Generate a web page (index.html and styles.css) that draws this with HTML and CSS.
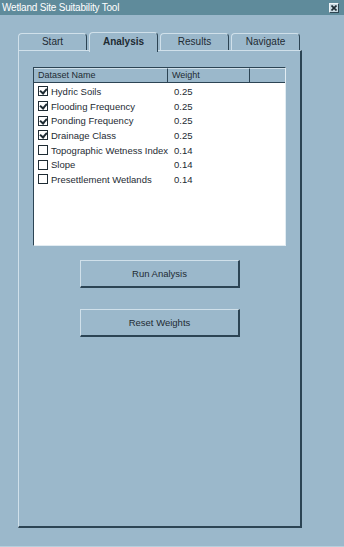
FILE: index.html
```html
<!DOCTYPE html>
<html>
<head>
  <title>Wetland Site Suitability Tool</title>
  <link rel="stylesheet" href="styles.css">
</head>
<body>
  <div class="window">
    <div class="titlebar">
      <span class="title">Wetland Site Suitability Tool</span>
      <span class="close">
        <svg width="6" height="6" viewBox="0 0 6 6"><path d="M0.5 0.5L5.5 5.5M5.5 0.5L0.5 5.5" stroke="#1c2b33" stroke-width="1.6"/></svg>
      </span>
    </div>

    <div class="content">
      <div class="tabs">
        <div class="tab">Start</div>
        <div class="tab active">Analysis</div>
        <div class="tab">Results</div>
        <div class="tab">Navigate</div>
      </div>

      <div class="panel">
        <div class="listbox">
          <div class="list-head">
            <div class="col-name">Dataset Name</div>
            <div class="col-weight">Weight</div>
            <div class="col-rest"></div>
          </div>
          <div class="list-body">
            <div class="row"><span class="check on"></span><span class="name">Hydric Soils</span><span class="weight">0.25</span></div>
            <div class="row"><span class="check on"></span><span class="name">Flooding Frequency</span><span class="weight">0.25</span></div>
            <div class="row"><span class="check on"></span><span class="name">Ponding Frequency</span><span class="weight">0.25</span></div>
            <div class="row"><span class="check on"></span><span class="name">Drainage Class</span><span class="weight">0.25</span></div>
            <div class="row"><span class="check"></span><span class="name">Topographic Wetness Index</span><span class="weight">0.14</span></div>
            <div class="row"><span class="check"></span><span class="name">Slope</span><span class="weight">0.14</span></div>
            <div class="row"><span class="check"></span><span class="name">Presettlement Wetlands</span><span class="weight">0.14</span></div>
          </div>
        </div>

        <button class="btn">Run Analysis</button>
        <button class="btn">Reset Weights</button>
      </div>
    </div>
  </div>
</body>
</html>
```

FILE: styles.css
```css
/* Global */
body {
  margin: 0;
  background-color: #9bb8cb;
  color: #1e2b33;
  font-family: "Liberation Sans", Arial, sans-serif;
  font-size: 9px;
}

.window {
  height: 547px;
  border-bottom: 1px solid #b8cfdc;
  box-sizing: border-box;
}

/* title bar */
.titlebar {
  height: 15px;
  background-color: #5f8b9b;
  color: #fff;
  display: flex;
  align-items: center;
  justify-content: space-between;
  padding: 0 5px 0 2px;
}

.title {
  font-size: 10px;
  letter-spacing: -0.2px;
}

.close {
  width: 10px;
  height: 10px;
  background-color: #c9d9e2;
  border: 1px solid #eef4f7;
  border-right-color: #2d4552;
  border-bottom-color: #2d4552;
  display: flex;
  align-items: center;
  justify-content: center;
  box-sizing: border-box;
}

.content {
  padding: 17px 42px 0 18px;
}

/* tabs */
.tabs {
  display: flex;
  height: 18px;
  align-items: flex-end;
}

.tab {
  width: 70px;
  height: 17px;
  margin-right: 2px;
  box-sizing: border-box;
  border: 1px solid #d0e0ea;
  border-right: 1px solid #2c4454;
  border-bottom: none;
  border-radius: 4px 4px 0 0;
  text-align: center;
  line-height: 16px;
  font-size: 10px;
  color: #1e2b33;
}

.tab.active {
  height: 20px;
  margin-bottom: -2px;
  position: relative;
  z-index: 1;
  background-color: #9bb8cb;
  font-weight: bold;
  line-height: 18px;
}

/* panel */
.panel {
  height: 478px;
  box-sizing: border-box;
  border-left: 1px solid #d0e0ea;
  border-top: 1px solid #d0e0ea;
  border-right: 2px solid #2c4454;
  border-bottom: 2px solid #2c4454;
  padding: 16px 14px 0 14px;
}

/* list */
.listbox {
  height: 179px;
  box-sizing: border-box;
  border: 1px solid #2c4454;
  border-right-color: #e2ecf2;
  border-bottom-color: #e2ecf2;
  background-color: #fff;
}

.list-head {
  display: flex;
  height: 14px;
  background-color: #9bb8cb;
  border-bottom: 1px solid #2c4454;
  font-size: 9px;
  line-height: 13px;
}

.col-name {
  width: 134px;
  padding-left: 4px;
  box-sizing: border-box;
  border-right: 1px solid #2c4454;
  border-top: 1px solid #d0e0ea;
}

.col-weight {
  width: 82px;
  padding-left: 4px;
  box-sizing: border-box;
  border-right: 1px solid #2c4454;
  border-top: 1px solid #d0e0ea;
}

.col-rest {
  flex: 1;
  border-top: 1px solid #d0e0ea;
}

.list-body {
  padding-top: 1px;
}

.row {
  display: flex;
  align-items: center;
  height: 14.7px;
  padding-left: 4px;
  font-size: 9.5px;
}

.check {
  width: 10px;
  height: 10px;
  box-sizing: border-box;
  border: 1px solid #1e2b33;
  background-color: #fff;
  margin-right: 3px;
  position: relative;
}

.check.on::after {
  content: "";
  position: absolute;
  left: 2px;
  top: 0px;
  width: 3px;
  height: 5px;
  border-right: 2px solid #1e2b33;
  border-bottom: 2px solid #1e2b33;
  transform: rotate(40deg);
}

.name {
  width: 123px;
  white-space: nowrap;
}

/* buttons */
.btn {
  display: block;
  width: 160px;
  height: 28px;
  margin: 14px 0 0 47px;
  background-color: #9bb8cb;
  border: 1px solid #d0e0ea;
  border-right: 2px solid #2c4454;
  border-bottom: 2px solid #2c4454;
  font-family: "Liberation Sans", Arial, sans-serif;
  font-size: 9.5px;
  color: #1e2b33;
  padding: 0;
}

.btn + .btn {
  margin-top: 21px;
}
```
